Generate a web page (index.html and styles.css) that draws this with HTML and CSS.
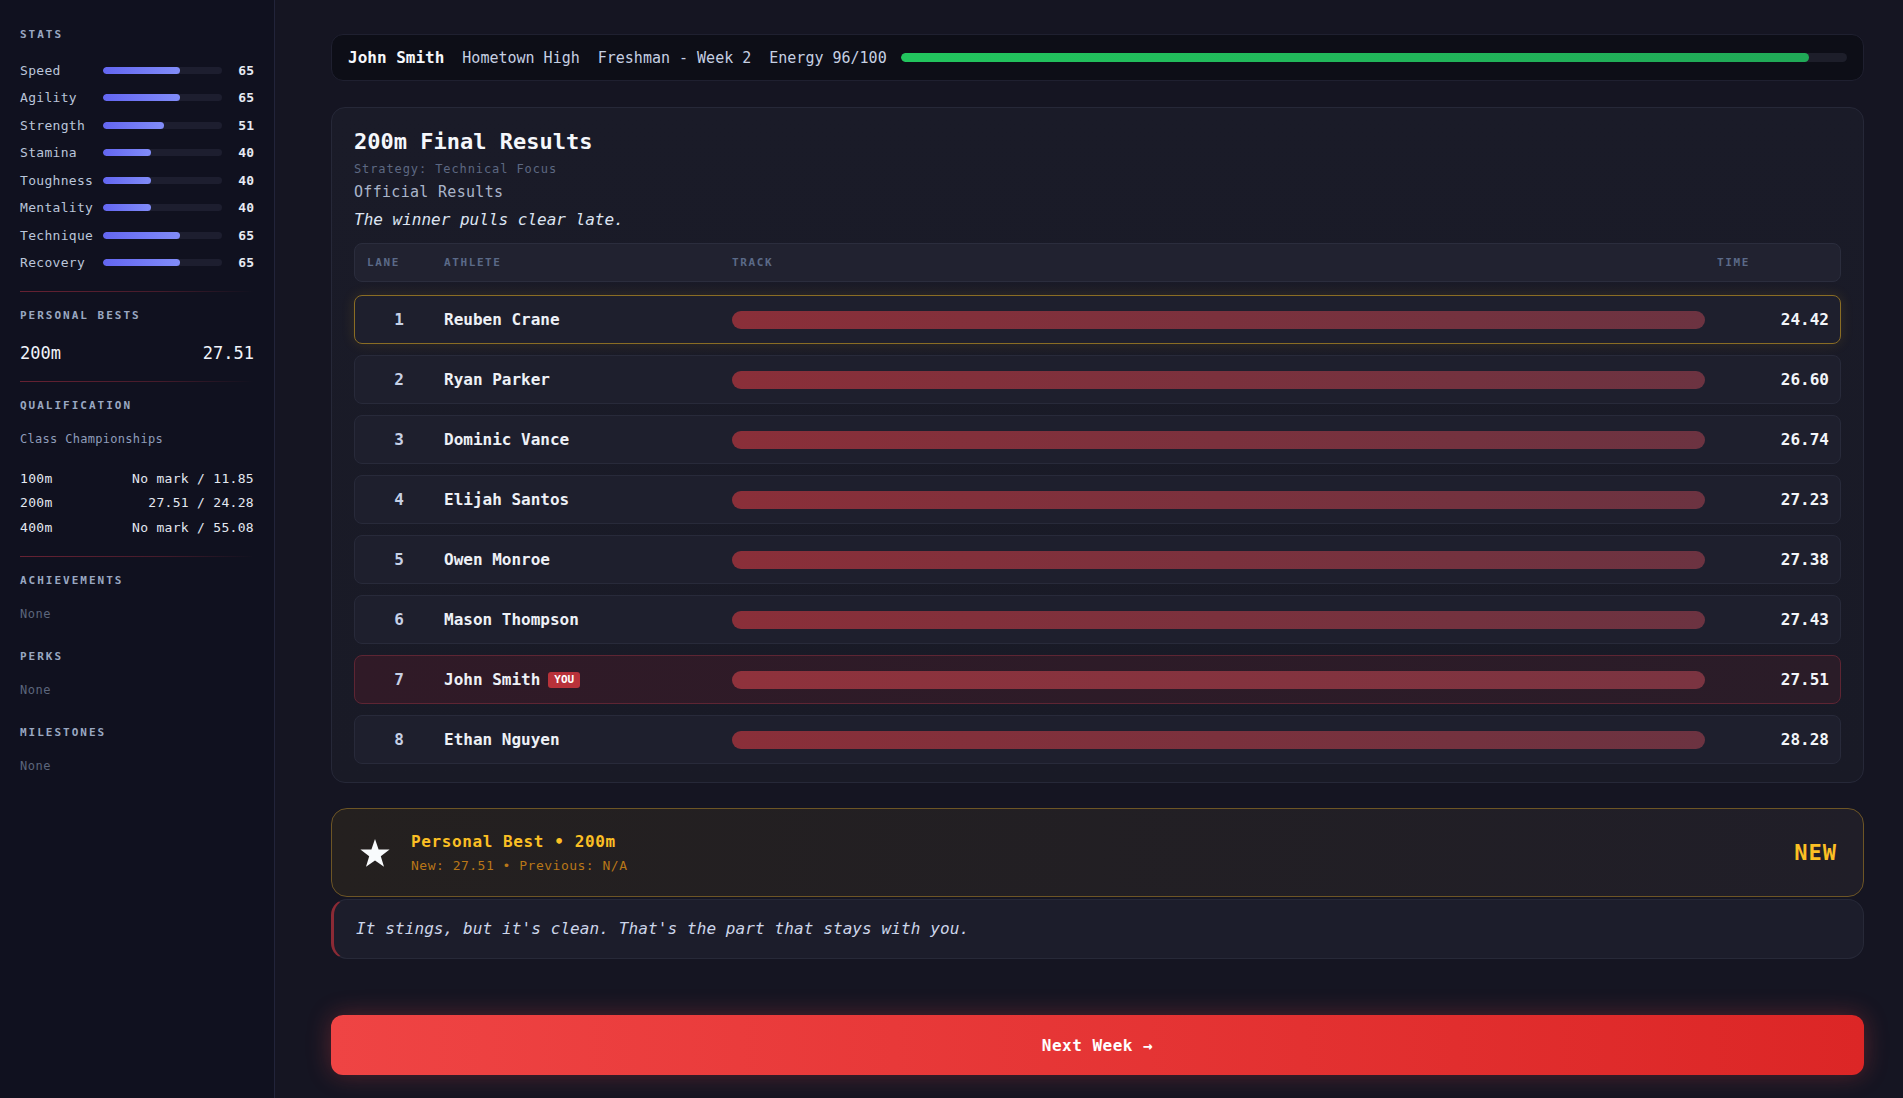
FILE: index.html
```html
<!DOCTYPE html>
<html lang="en">
<head>
  <meta charset="UTF-8" />
  <meta name="viewport" content="width=device-width, initial-scale=1.0"/>
  <title>200m Final Results</title>
  <link rel="stylesheet" href="styles.css">
</head>
<body>
<div class="app">

  <!-- Sidebar -->
  <aside class="sidebar">
    <h4 class="side-label">Stats</h4>
    <div class="stat-list">
      <div class="stat-row"><span class="stat-name">Speed</span><div class="stat-track"><div class="stat-fill" style="width: 65%"></div></div><span class="stat-val">65</span></div>
      <div class="stat-row"><span class="stat-name">Agility</span><div class="stat-track"><div class="stat-fill" style="width: 65%"></div></div><span class="stat-val">65</span></div>
      <div class="stat-row"><span class="stat-name">Strength</span><div class="stat-track"><div class="stat-fill" style="width: 51%"></div></div><span class="stat-val">51</span></div>
      <div class="stat-row"><span class="stat-name">Stamina</span><div class="stat-track"><div class="stat-fill" style="width: 40%"></div></div><span class="stat-val">40</span></div>
      <div class="stat-row"><span class="stat-name">Toughness</span><div class="stat-track"><div class="stat-fill" style="width: 40%"></div></div><span class="stat-val">40</span></div>
      <div class="stat-row"><span class="stat-name">Mentality</span><div class="stat-track"><div class="stat-fill" style="width: 40%"></div></div><span class="stat-val">40</span></div>
      <div class="stat-row"><span class="stat-name">Technique</span><div class="stat-track"><div class="stat-fill" style="width: 65%"></div></div><span class="stat-val">65</span></div>
      <div class="stat-row"><span class="stat-name">Recovery</span><div class="stat-track"><div class="stat-fill" style="width: 65%"></div></div><span class="stat-val">65</span></div>
    </div>

    <div class="side-divider"></div>

    <h4 class="side-label">Personal Bests</h4>
    <div class="pb-row"><span>200m</span><span>27.51</span></div>

    <div class="side-divider"></div>

    <h4 class="side-label">Qualification</h4>
    <p class="qual-name">Class Championships</p>
    <div class="qual-list">
      <div class="qual-row"><span>100m</span><span>No mark / 11.85</span></div>
      <div class="qual-row"><span>200m</span><span>27.51 / 24.28</span></div>
      <div class="qual-row"><span>400m</span><span>No mark / 55.08</span></div>
    </div>

    <div class="side-divider last"></div>

    <h4 class="side-label">Achievements</h4>
    <p class="none">None</p>
    <h4 class="side-label spaced">Perks</h4>
    <p class="none">None</p>
    <h4 class="side-label spaced">Milestones</h4>
    <p class="none">None</p>
  </aside>

  <!-- Main -->
  <main class="main">
    <div class="topbar">
      <span class="tb-name">John Smith</span>
      <span class="tb-item">Hometown High</span>
      <span class="tb-item">Freshman - Week 2</span>
      <span class="tb-item">Energy 96/100</span>
      <div class="energy-track"><div class="energy-fill" style="width: 96%"></div></div>
    </div>

    <section class="results-card">
      <h2 class="results-title">200m Final Results</h2>
      <p class="strategy">Strategy: Technical Focus</p>
      <p class="official">Official Results</p>
      <p class="flavor">The winner pulls clear late.</p>

      <div class="table-head">
        <span class="th-lane">Lane</span>
        <span>Athlete</span>
        <span>Track</span>
        <span>Time</span>
      </div>

      <div class="rows">
        <div class="row winner"><span class="lane">1</span><span class="name">Reuben Crane</span><div class="track"></div><span class="time">24.42</span></div>
        <div class="row"><span class="lane">2</span><span class="name">Ryan Parker</span><div class="track"></div><span class="time">26.60</span></div>
        <div class="row"><span class="lane">3</span><span class="name">Dominic Vance</span><div class="track"></div><span class="time">26.74</span></div>
        <div class="row"><span class="lane">4</span><span class="name">Elijah Santos</span><div class="track"></div><span class="time">27.23</span></div>
        <div class="row"><span class="lane">5</span><span class="name">Owen Monroe</span><div class="track"></div><span class="time">27.38</span></div>
        <div class="row"><span class="lane">6</span><span class="name">Mason Thompson</span><div class="track"></div><span class="time">27.43</span></div>
        <div class="row you"><span class="lane">7</span><span class="name">John Smith <span class="you-badge">YOU</span></span><div class="track"></div><span class="time">27.51</span></div>
        <div class="row"><span class="lane">8</span><span class="name">Ethan Nguyen</span><div class="track"></div><span class="time">28.28</span></div>
      </div>
    </section>

    <div class="pb-card">
      <svg class="pb-star" width="32" height="30" viewBox="0 0 32 30"><polygon fill="#f8fafc" points="16,1 19.6,11.4 30.6,11.6 21.8,18.2 25,28.8 16,22.5 7,28.8 10.2,18.2 1.4,11.6 12.4,11.4"/></svg>
      <div class="pb-text">
        <div class="pb-title">Personal Best • 200m</div>
        <div class="pb-sub">New: 27.51 • Previous: N/A</div>
      </div>
      <span class="pb-new">NEW</span>
    </div>

    <div class="quote-card">It stings, but it's clean. That's the part that stays with you.</div>

    <button class="next-btn">Next Week →</button>
  </main>
</div>
</body>
</html>
```

FILE: styles.css
```css
* {
  box-sizing: border-box;
}

body {
  margin: 0;
  font-family: "DejaVu Sans Mono", "Liberation Mono", monospace;
  background-color: #151522;
  color: #e5e9f2;
}

.app {
  display: flex;
  min-height: 100vh;
}

/* Sidebar */
.sidebar {
  width: 275px;
  flex-shrink: 0;
  min-height: 100vh;
  background-color: #10111f;
  border-right: 1px solid #22243a;
  padding: 28px 20px 0 20px;
}

.side-label {
  margin: 0;
  font-size: 11px;
  line-height: 14px;
  font-weight: bold;
  letter-spacing: 2px;
  text-transform: uppercase;
  color: #9aa8c2;
}

.side-label.spaced {
  margin-top: 28px;
}

.stat-list {
  margin-top: 18px;
  display: flex;
  flex-direction: column;
  gap: 7.5px;
}

.stat-row {
  display: grid;
  grid-template-columns: 75px 1fr 24px;
  gap: 8px;
  align-items: center;
  height: 20px;
}

.stat-name {
  font-size: 13px;
  letter-spacing: 0.3px;
  color: #bac5da;
}

.stat-track {
  height: 7px;
  background-color: #1d1e2f;
  border-radius: 4px;
  overflow: hidden;
}

.stat-fill {
  height: 100%;
  background: linear-gradient(90deg, #6366f1, #818cf8);
  border-radius: 4px;
}

.stat-val {
  font-size: 13px;
  font-weight: bold;
  text-align: right;
  color: #e6eaf3;
}

.side-divider {
  height: 1px;
  margin: 18px 0 17px;
  background: linear-gradient(90deg, rgba(190, 50, 70, 0.5), rgba(190, 50, 70, 0.3) 60%, rgba(190, 50, 70, 0));
}

.side-divider.last {
  margin-top: 20px;
}

.pb-row {
  margin-top: 20px;
  display: flex;
  justify-content: space-between;
  font-size: 17px;
  line-height: 20px;
  color: #f1f4fa;
}

.qual-name {
  margin: 18px 0 0;
  font-size: 12px;
  line-height: 16px;
  letter-spacing: 0.3px;
  color: #8f9dba;
}

.qual-list {
  margin-top: 24px;
  display: flex;
  flex-direction: column;
  gap: 8.5px;
}

.qual-row {
  display: flex;
  justify-content: space-between;
  font-size: 13px;
  line-height: 16px;
  letter-spacing: 0.3px;
  color: #e3e8f1;
}

.none {
  margin: 18px 0 0;
  font-size: 12px;
  line-height: 16px;
  letter-spacing: 0.5px;
  color: #5c667c;
}

/* Main */
.main {
  flex: 1;
  padding: 34px 39px 20px 56px;
  display: flex;
  flex-direction: column;
}

.topbar {
  height: 47px;
  display: flex;
  align-items: center;
  gap: 18px;
  padding: 0 16px;
  background-color: #0d0e17;
  border: 1px solid #1f2030;
  border-radius: 12px;
}

.tb-name {
  font-size: 16px;
  font-weight: bold;
  color: #f5f7fb;
}

.tb-item {
  font-size: 15px;
  color: #c6d0e3;
}

.energy-track {
  flex: 1;
  height: 9px;
  margin-left: -4px;
  background-color: #1d1e2a;
  border-radius: 5px;
  overflow: hidden;
}

.energy-fill {
  height: 100%;
  background: linear-gradient(90deg, #22c55e, #20a957);
  border-radius: 5px;
}

.results-card {
  margin-top: 26px;
  padding: 21px 22px 18px;
  background: linear-gradient(180deg, #1a1b28, #191a26);
  border: 1px solid #262838;
  border-radius: 14px;
}

.results-title {
  margin: 0;
  font-size: 22px;
  line-height: 26px;
  color: #f5f7fb;
}

.strategy {
  margin: 6px 0 0;
  font-size: 12px;
  line-height: 16px;
  letter-spacing: 0.9px;
  color: #5d6882;
}

.official {
  margin: 5px 0 0;
  font-size: 15px;
  line-height: 20px;
  letter-spacing: 0.3px;
  color: #aab5ca;
}

.flavor {
  margin: 7px 0 0;
  font-size: 16px;
  line-height: 22px;
  font-style: italic;
  color: #dde4f1;
}

.table-head,
.row {
  display: grid;
  grid-template-columns: 66px 276px 1fr 112px;
  gap: 12px;
  align-items: center;
  padding: 0 11px;
}

.table-head {
  margin-top: 12px;
  height: 39px;
  background-color: #212230;
  border: 1px solid #2b2d3d;
  border-radius: 8px;
  font-size: 11px;
  font-weight: bold;
  letter-spacing: 1.6px;
  text-transform: uppercase;
  color: #5b6a88;
}

.th-lane {
  padding-left: 1px;
}

.rows {
  margin-top: 13px;
  display: flex;
  flex-direction: column;
  gap: 11px;
}

.row {
  height: 49px;
  background-color: #1e1f2d;
  border: 1px solid #282a3a;
  border-radius: 8px;
}

.row.winner {
  border-color: #8a6d24;
  box-shadow: 0 0 14px rgba(251, 191, 36, 0.12);
}

.row.you {
  background: linear-gradient(90deg, #301a27, #2a1c28);
  border-color: #5e2533;
}

.lane {
  text-align: center;
  font-size: 16px;
  font-weight: bold;
  color: #c6d0e6;
}

.name {
  display: flex;
  align-items: center;
  gap: 8px;
  font-size: 16px;
  font-weight: bold;
  color: #eef1f7;
}

.you-badge {
  font-size: 11px;
  line-height: 16px;
  font-weight: bold;
  padding: 0 6px;
  border-radius: 3px;
  background-color: #b8323a;
  color: #ffffff;
}

.track {
  height: 18px;
  border-radius: 9px;
  background: linear-gradient(90deg, #8a2f39, #6c3341);
}

.row.you .track {
  background: linear-gradient(90deg, #8f323c, #7a3441);
}

.time {
  text-align: right;
  font-size: 16px;
  font-weight: bold;
  color: #f3f5f9;
}

.pb-card {
  margin-top: 25px;
  height: 89px;
  display: flex;
  align-items: center;
  gap: 20px;
  padding: 0 26px 0 27px;
  background: linear-gradient(90deg, #24201f, #201e28);
  border: 1px solid #6d5525;
  border-radius: 16px;
}

.pb-title {
  font-size: 16px;
  line-height: 20px;
  font-weight: bold;
  letter-spacing: 0.6px;
  color: #fbbf24;
}

.pb-sub {
  margin-top: 6px;
  font-size: 13px;
  line-height: 16px;
  letter-spacing: 0.5px;
  color: #b97718;
}

.pb-new {
  margin-left: auto;
  font-size: 22px;
  font-weight: bold;
  letter-spacing: 1px;
  color: #fbbf24;
}

.quote-card {
  margin-top: 2px;
  height: 60px;
  padding: 18px 22px;
  background-color: #1c1d2b;
  border: 1px solid #272938;
  border-left: 3px solid #8b2a35;
  border-radius: 16px;
  font-size: 16px;
  line-height: 22px;
  font-style: italic;
  letter-spacing: 0.1px;
  color: #cdd6ea;
}

.next-btn {
  margin-top: 56px;
  height: 60px;
  border: none;
  border-radius: 12px;
  background: linear-gradient(90deg, #ef4444, #dc2626);
  box-shadow: 0 0 24px rgba(239, 68, 68, 0.3);
  font-family: inherit;
  font-size: 16px;
  font-weight: bold;
  letter-spacing: 0.5px;
  color: #ffffff;
  cursor: pointer;
}
```
